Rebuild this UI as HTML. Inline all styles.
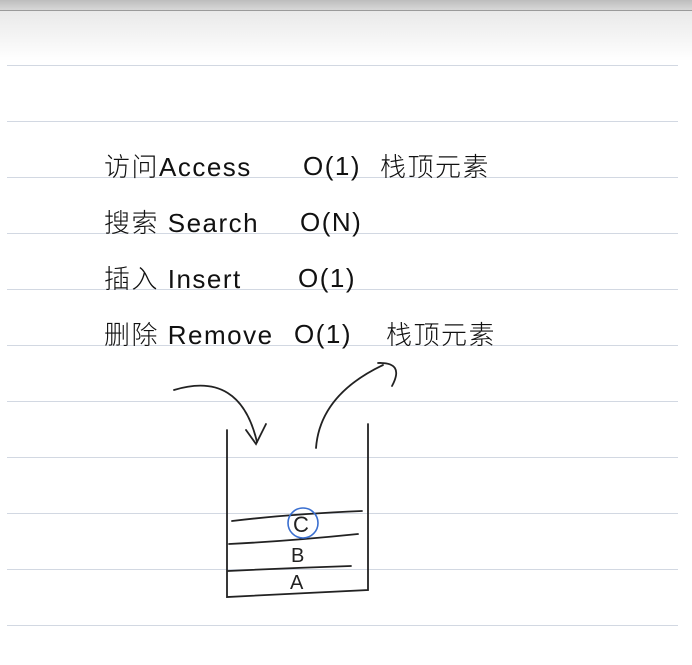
<!DOCTYPE html>
<html><head><meta charset="utf-8"><style>
html,body{margin:0;padding:0;width:692px;height:665px;overflow:hidden;background:#fff;font-family:"Liberation Sans","Noto Sans CJK SC",sans-serif;}
.top{position:absolute;left:0;top:0;width:692px;height:10px;background:linear-gradient(#bdbdbd,#d8d8d8);border-bottom:1px solid #9a9a9a;}
.fade{position:absolute;left:0;top:11px;width:692px;height:50px;background:linear-gradient(#e9e9e9,#fff);}
.l{position:absolute;left:7px;width:671px;height:1px;background:#d2d8e2;}
.t{position:absolute;font-size:26px;color:#111;font-weight:300;white-space:nowrap;letter-spacing:1.5px;}
</style></head><body>
<div class="top"></div><div class="fade"></div>
<div class="l" style="top:65px"></div><div class="l" style="top:121px"></div><div class="l" style="top:177px"></div><div class="l" style="top:233px"></div><div class="l" style="top:289px"></div><div class="l" style="top:345px"></div><div class="l" style="top:401px"></div><div class="l" style="top:457px"></div><div class="l" style="top:513px"></div><div class="l" style="top:569px"></div><div class="l" style="top:625px"></div>
<div class="t" style="left:104px;top:147px">访问Access</div><div class="t" style="left:303px;top:151px">O(1)</div><div class="t" style="left:380px;top:147px">栈顶元素</div>
<div class="t" style="left:104px;top:203px">搜索 Search</div><div class="t" style="left:300px;top:207px">O(N)</div>
<div class="t" style="left:104px;top:259px">插入 Insert</div><div class="t" style="left:298px;top:263px">O(1)</div>
<div class="t" style="left:104px;top:315px">删除 Remove</div><div class="t" style="left:294px;top:319px">O(1)</div><div class="t" style="left:386px;top:315px">栈顶元素</div>
<svg width="692" height="665" style="position:absolute;left:0;top:0" fill="none" stroke="#222" stroke-width="1.8" stroke-linecap="round">
<path d="M227 430 L227 597 L368 590 L368 424"/>
<path d="M232 521 Q290 514 362 511"/>
<path d="M229 544 Q290 541 358 534"/>
<path d="M228 571 Q290 568 351 566"/>
<path d="M174 390 Q240 370 257 442"/>
<path d="M246 430 L256 444 L266 424"/>
<path d="M316 448 Q320 395 383 365"/>
<path d="M378 363 Q405 362 392 386"/>
<circle cx="303" cy="523" r="15" stroke="#3a6fd0" stroke-width="1.6"/>
<text x="293" y="532" font-size="22" fill="#222" stroke="none" font-family="Liberation Sans">C</text>
<text x="291" y="562" font-size="20" fill="#222" stroke="none" font-family="Liberation Sans">B</text>
<text x="290" y="589" font-size="20" fill="#222" stroke="none" font-family="Liberation Sans">A</text>
</svg>
</body></html>
